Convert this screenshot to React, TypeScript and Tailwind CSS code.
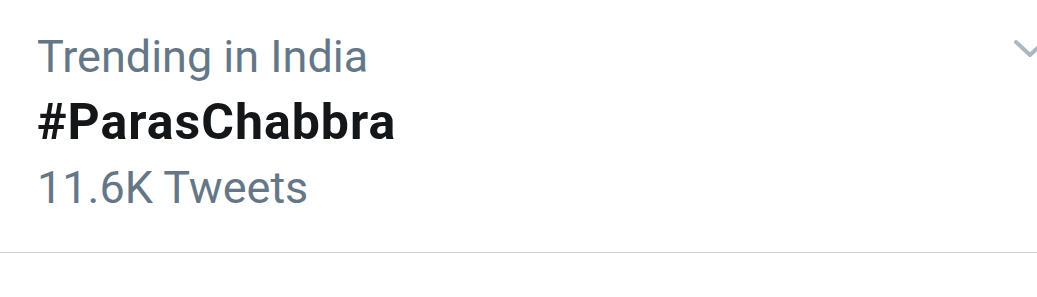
export default function App() {
  return (
    <div className="w-[1037px] h-[297px] bg-white overflow-hidden font-['Roboto',sans-serif]">
      <div className="flex justify-between border-b border-[#ccd0d3] pl-[37px] pt-[24px] pb-[31px]">
        <div className="flex flex-col">
          <span className="text-[45px] leading-[66px] text-[#657786]">Trending in India</span>
          <span className="text-[50px] leading-[64px] font-bold tracking-[1px] text-[#14171a]">#ParasChabbra</span>
          <span className="text-[45px] leading-[67px] text-[#657786]">11.6K Tweets</span>
        </div>
        <svg
          className="mr-[-10px] mt-[15px] shrink-0"
          width="34"
          height="20"
          viewBox="0 0 34 20"
          fill="none"
          stroke="#aab8c2"
          strokeWidth="4"
          strokeLinecap="round"
          strokeLinejoin="round"
        >
          <path d="M3 3 L17 16 L31 3" />
        </svg>
      </div>
    </div>
  );
}
